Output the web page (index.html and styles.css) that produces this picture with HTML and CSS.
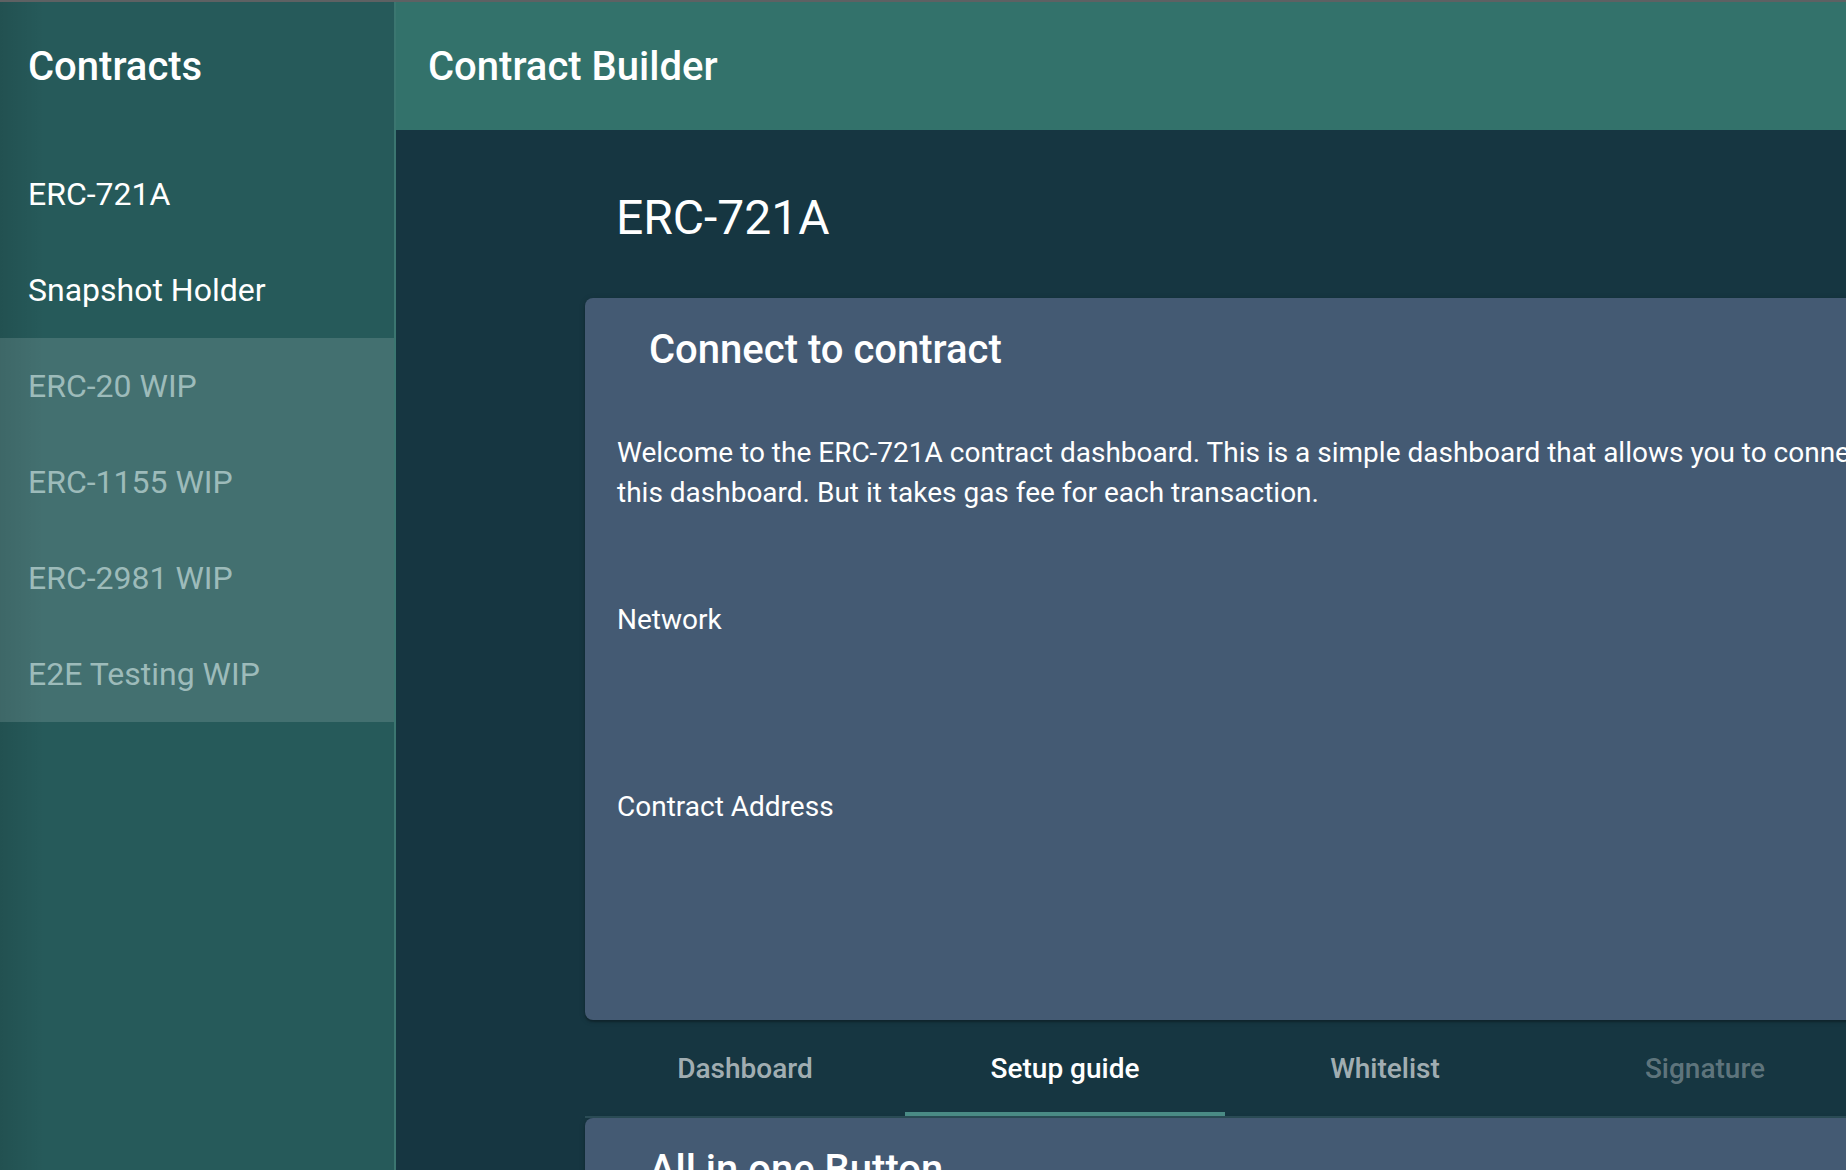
FILE: index.html
```html
<!DOCTYPE html>
<html lang="en">

<head>
    <meta charset="UTF-8">
    <meta name="viewport" content="width=device-width, initial-scale=1.0">
    <title>Contract Builder</title>
    <link rel="stylesheet" href="styles.css">
</head>

<body>
    <aside class="sidebar">
        <div class="sidebar-head">Contracts</div>
        <ul class="menu">
            <li class="menu-item">ERC-721A</li>
            <li class="menu-item">Snapshot Holder</li>
            <li class="menu-item wip">ERC-20 WIP</li>
            <li class="menu-item wip">ERC-1155 WIP</li>
            <li class="menu-item wip">ERC-2981 WIP</li>
            <li class="menu-item wip">E2E Testing WIP</li>
        </ul>
    </aside>

    <div class="main">
        <header class="topbar">Contract Builder</header>

        <div class="content">
            <h1 class="page-title">ERC-721A</h1>

            <!-- 连接合约 -->
            <section class="card">
                <h2 class="card-title">Connect to contract</h2>
                <div class="card-body">
                    <p class="intro">
                        <span class="intro-line">Welcome to the ERC-721A contract dashboard. This is a simple dashboard that allows you to connect to your contract and call its functions from</span>
                        <span class="intro-line">this dashboard. But it takes gas fee for each transaction.</span>
                    </p>
                    <div class="field field-network">
                        <div class="field-label">Network</div>
                    </div>
                    <div class="field field-address">
                        <div class="field-label">Contract Address</div>
                    </div>
                </div>
            </section>

            <nav class="tabs">
                <div class="tab">Dashboard</div>
                <div class="tab active">Setup guide</div>
                <div class="tab">Whitelist</div>
                <div class="tab disabled">Signature</div>
            </nav>

            <section class="card card-tall">
                <h2 class="card-title">All in one Button</h2>
            </section>
        </div>
    </div>
</body>

</html>
```

FILE: styles.css
```css
html,
body {
    height: 100%;
}

body {
    display: flex;
    margin: 0;
    overflow: hidden;
    box-sizing: border-box;
    border-top: 2px solid #5e6163;
    background-color: #163641;
    color: #fff;
    font-family: Roboto, "Liberation Sans", sans-serif;
}

.sidebar {
    flex: 0 0 394px;
    border-right: 2px solid #3b7670;
    background: linear-gradient(to right, rgba(0, 0, 0, 0.1), rgba(0, 0, 0, 0) 44px), #265a5a;
}

.sidebar-head {
    height: 128px;
    padding-left: 28px;
    display: flex;
    align-items: center;
    font-size: 40px;
    font-weight: 500;
}

.menu {
    list-style: none;
    margin: 0;
    padding: 16px 0 0;
}

.menu-item {
    height: 96px;
    padding-left: 28px;
    display: flex;
    align-items: center;
    font-size: 32px;
}

.menu-item.wip {
    background: linear-gradient(to right, rgba(0, 0, 0, 0.08), rgba(0, 0, 0, 0) 44px), #437070;
    color: #9dbbba;
}

.main {
    flex: 1;
    min-width: 0;
    overflow: hidden;
}

.topbar {
    height: 128px;
    padding-left: 32px;
    display: flex;
    align-items: center;
    background-color: #33726b;
    font-size: 40px;
    font-weight: 500;
}

.content {
    width: 1280px;
    padding: 60px 0 0 189px;
}

.page-title {
    margin: 0 0 52px 31px;
    font-size: 48px;
    font-weight: 400;
    line-height: 56px;
}

.card {
    background-color: #445a73;
    border-radius: 8px;
    box-shadow: 0 2px 2px rgba(0, 0, 0, 0.25), 0 1px 6px rgba(0, 0, 0, 0.15);
}

.card-tall {
    min-height: 400px;
}

.card-title {
    margin: 0;
    padding: 23px 0 0 64px;
    font-size: 40px;
    font-weight: 500;
    line-height: 58px;
}

.card-body {
    padding: 0 32px;
}

.intro {
    margin: 54px 0 0;
    font-size: 28px;
    line-height: 40px;
}

.intro-line {
    display: block;
    white-space: nowrap;
}

.field-label {
    font-size: 28px;
    line-height: 40px;
}

.field-network {
    margin-top: 87px;
    height: 187px;
}

.field-address {
    height: 233px;
}

.tabs {
    display: flex;
    height: 96px;
    border-bottom: 2px solid #2c4e58;
}

.tab {
    flex: 0 0 320px;
    display: flex;
    align-items: center;
    justify-content: center;
    box-sizing: border-box;
    font-size: 28px;
    font-weight: 500;
    color: rgba(255, 255, 255, 0.62);
}

.tab.active {
    color: #fff;
    border-bottom: 4px solid #4a8b85;
    padding-top: 4px;
}

.tab.disabled {
    color: rgba(255, 255, 255, 0.32);
}
```
